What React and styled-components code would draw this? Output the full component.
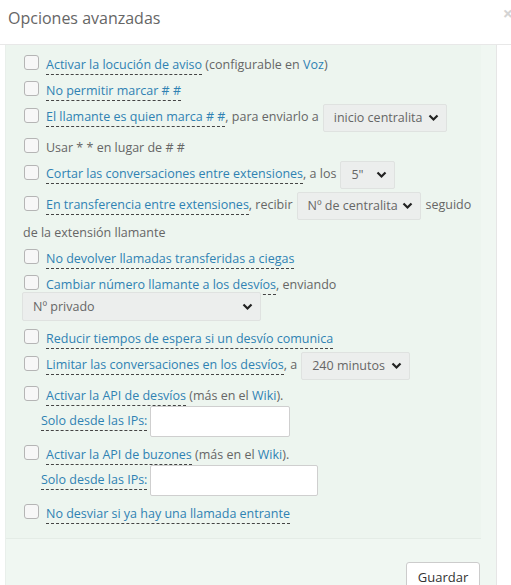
import React from "react";
import styled, { createGlobalStyle } from "styled-components";

const GlobalStyle = createGlobalStyle`
  html, body {
    margin: 0;
    padding: 0;
    background: #ffffff;
    font-family: "Open Sans", "Liberation Sans", sans-serif;
    overflow: hidden;
  }
`;

const Modal = styled.div`
  width: 511px;
  height: 585px;
  background: #fff;
  overflow: hidden;
  display: flex;
  flex-direction: column;
`;

const Header = styled.div`
  flex: none;
  display: flex;
  justify-content: space-between;
  align-items: flex-start;
  height: 45px;
  border-bottom: 1px solid #e8e8e8;
  box-sizing: border-box;
  padding: 7px 0 0 8px;
  overflow: hidden;
`;

const Title = styled.h4`
  margin: 0;
  font-size: 16px;
  font-weight: 400;
  color: #666;
  line-height: 22px;
`;

const Close = styled.span`
  font-size: 18px;
  font-weight: 700;
  line-height: 12px;
  color: #d4d4d4;
  margin-right: -2px;
`;

const Body = styled.div`
  margin-left: 5px;
  width: 492px;
  flex: 1;
  min-height: 0;
  overflow: hidden;
  background: #f0f7f2;
  border-right: 1px solid #e6e6e6;
  border-left: 1px solid #e9efeb;
  box-sizing: border-box;
`;

const Well = styled.div`
  display: flex;
  flex-direction: column;
  width: 475px;
  box-sizing: border-box;
  padding: 7px 0 11px 17px;
  background: #edf5ef;
  border-bottom: 1px solid #e4ece6;
  font-size: 12.5px;
  color: #666;
`;

const Row = styled.div`
  line-height: 26px;
`;

const SelectRow = styled(Row)`
  padding-bottom: 3px;
`;

const Continued = styled.div`
  line-height: 26px;
`;

const Group = styled.div`
  display: flex;
  flex-direction: column;
  padding-bottom: 5px;
`;

const Box = styled.span`
  display: inline-block;
  width: 13px;
  height: 13px;
  border: 1px solid #b5b5b5;
  border-radius: 3px;
  background: #f7f7f7;
  margin: 0 7px 6px 1px;
  vertical-align: middle;
`;

const Dashed = styled.span`
  color: #2f82b3;
  border-bottom: 1px dashed #444;
  padding-bottom: 1px;
`;

const Link = styled.span`
  color: #2f82b3;
`;

const Select = styled.span`
  display: inline-flex;
  align-items: center;
  justify-content: space-between;
  vertical-align: middle;
  box-sizing: border-box;
  width: ${(p) => p.w}px;
  height: 28px;
  padding: 0 7px 0 10px;
  margin: 0 5px 0 4px;
  background: #eceeed;
  border: 1px solid #dfe2e0;
  border-radius: 2px;
  color: #666;
  line-height: 26px;
`;

const FullSelect = styled(Select)`
  display: flex;
  margin: -6px 0 5px -1px;
  height: 29px;
`;

const SubRow = styled.div`
  display: flex;
  align-items: center;
  padding-left: 18px;
  margin-top: -3px;
`;

const Input = styled.div`
  width: ${(p) => p.w}px;
  height: 31px;
  box-sizing: border-box;
  background: #fff;
  border: 1px solid #cfcfcf;
  border-radius: 2px;
  margin-left: 3px;
`;

const Footer = styled.div`
  display: flex;
  justify-content: flex-end;
  padding: 23px 16px 0 0;
`;

const Button = styled.button`
  font-family: inherit;
  font-size: 13px;
  color: #333;
  background: #fff;
  border: 1px solid #ccc;
  border-radius: 3px;
  padding: 5px 10px 8px;
  width: 74px;
`;

const Chevron = () => (
  <svg width="11" height="8" viewBox="0 0 11 8">
    <path d="M1.5 1.5 L5.5 5.5 L9.5 1.5" fill="none" stroke="#222" strokeWidth="2.2" />
  </svg>
);

const Sel = ({ w, children, full }) => {
  const C = full ? FullSelect : Select;
  return (
    <C w={w}>
      <span>{children}</span>
      <Chevron />
    </C>
  );
};

const ApiOption = ({ label, inputWidth }) => (
  <Group>
    <Row>
      <Box />
      <Dashed>{label}</Dashed> (más en el <Link>Wiki</Link>).
    </Row>
    <SubRow>
      <Dashed>Solo desde las IPs:</Dashed>
      <Input w={inputWidth} />
    </SubRow>
  </Group>
);

export default function App() {
  return (
    <Modal>
      <GlobalStyle />
      <Header>
        <Title>Opciones avanzadas</Title>
        <Close>×</Close>
      </Header>
      <Body>
        <Well>
          <Row>
            <Box />
            <Dashed>Activar la locución de aviso</Dashed> (configurable en <Link>Voz</Link>)
          </Row>
          <Row>
            <Box />
            <Dashed>No permitir marcar # #</Dashed>
          </Row>
          <SelectRow>
            <Box />
            <Dashed>El llamante es quien marca # #</Dashed>, para enviarlo a
            <Sel w={124}>inicio centralita</Sel>
          </SelectRow>
          <Row>
            <Box />
            Usar * * en lugar de # #
          </Row>
          <SelectRow>
            <Box />
            <Dashed>Cortar las conversaciones entre extensiones</Dashed>, a los
            <Sel w={55}>5"</Sel>
          </SelectRow>
          <Row>
            <Box />
            <Dashed>En transferencia entre extensiones</Dashed>, recibir
            <Sel w={124}>Nº de centralita</Sel>
            <span>seguido</span>
            <Continued>de la extensión llamante</Continued>
          </Row>
          <Row>
            <Box />
            <Dashed>No devolver llamadas transferidas a ciegas</Dashed>
          </Row>
          <Row>
            <Box />
            <Dashed>Cambiar número llamante a los desvíos</Dashed>, enviando
          </Row>
          <Sel w={239} full>
            Nº privado
          </Sel>
          <Row>
            <Box />
            <Dashed>Reducir tiempos de espera si un desvío comunica</Dashed>
          </Row>
          <SelectRow>
            <Box />
            <Dashed>Limitar las conversaciones en los desvíos</Dashed>, a
            <Sel w={109}>240 minutos</Sel>
          </SelectRow>
          <ApiOption label="Activar la API de desvíos" inputWidth={140} />
          <ApiOption label="Activar la API de buzones" inputWidth={168} />
          <Row>
            <Box />
            <Dashed>No desviar si ya hay una llamada entrante</Dashed>
          </Row>
        </Well>
        <Footer>
          <Button>Guardar</Button>
        </Footer>
      </Body>
    </Modal>
  );
}
